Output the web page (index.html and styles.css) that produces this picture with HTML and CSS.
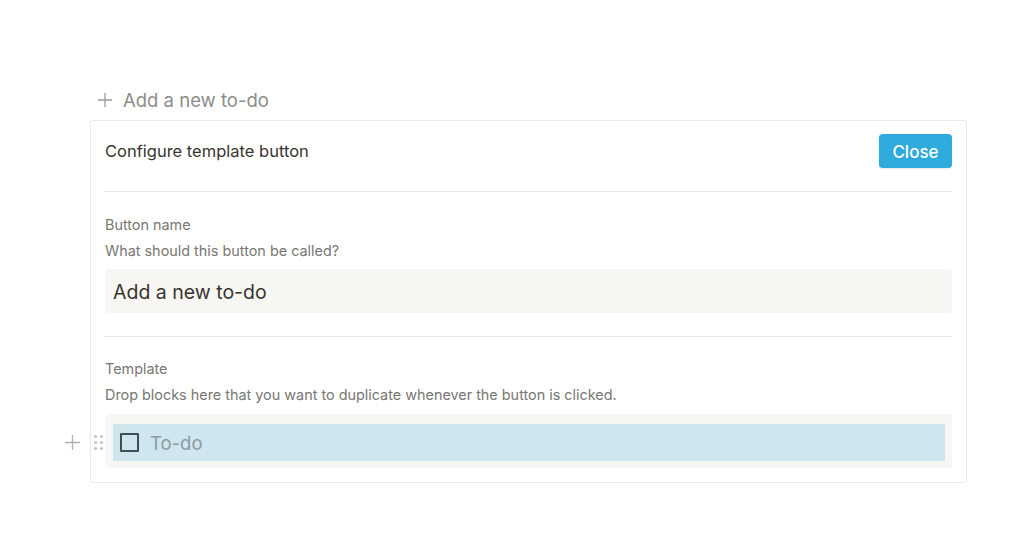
FILE: index.html
```html
<!DOCTYPE html>
<html>
<head>
<meta charset="utf-8">
<link rel="stylesheet" href="styles.css">
</head>
<body>
<div class="page">
  <div class="trigger">
    <svg class="plus" width="16" height="16" viewBox="0 0 16 16"><path d="M8 1v14M1 8h14" stroke="#9b9a97" stroke-width="1.3" fill="none"/></svg>
    <span>Add a new to-do</span>
  </div>
  <div class="card">
    <div class="header">
      <div class="title">Configure template button</div>
      <button class="close">Close</button>
    </div>
    <div class="section">
      <div class="label">Button name</div>
      <div class="hint">What should this button be called?</div>
      <div class="input">Add a new to-do</div>
    </div>
    <div class="section last">
      <div class="label">Template</div>
      <div class="hint">Drop blocks here that you want to duplicate whenever the button is clicked.</div>
      <div class="template">
        <div class="row">
          <div class="handles">
            <svg width="17" height="17" viewBox="0 0 17 17"><path d="M8.5 1v15M1 8.5h15" stroke="#b4b3b0" stroke-width="1.3" fill="none"/></svg>
            <svg width="11" height="17" viewBox="0 0 11 17"><g fill="#c6c5c2"><circle cx="2.5" cy="2.5" r="1.6"/><circle cx="8.5" cy="2.5" r="1.6"/><circle cx="2.5" cy="8.5" r="1.6"/><circle cx="8.5" cy="8.5" r="1.6"/><circle cx="2.5" cy="14.5" r="1.6"/><circle cx="8.5" cy="14.5" r="1.6"/></g></svg>
          </div>
          <span class="checkbox"></span>
          <span class="todo">To-do</span>
        </div>
      </div>
    </div>
  </div>
</div>
</body>
</html>
```
FILE: styles.css
```css
* { box-sizing: border-box; }
body {
  margin: 0;
  background: #fff;
  font-family: Inter, "Liberation Sans", Arial, sans-serif;
  color: #37352f;
}
.page {
  padding: 89px 0 0 90px;
}
.trigger {
  display: flex;
  align-items: center;
  gap: 10px;
  padding-left: 7px;
  height: 22px;
  font-size: 18.5px;
  color: #8d8c89;
  margin-bottom: 9px;
}
.card {
  width: 877px;
  border: 1px solid #e9e9e7;
  border-radius: 3px;
  padding: 0 14px 14px;
  box-shadow: 0 0 1px rgba(0,0,0,0.03);
}
.header {
  display: flex;
  align-items: center;
  justify-content: space-between;
  padding: 13px 0 23px;
  border-bottom: 1px solid #e6e6e4;
}
.title {
  font-size: 16.5px;
  line-height: 20px;
  color: #37352f;
}
.close {
  width: 73px;
  height: 34px;
  border: none;
  border-radius: 4px;
  background: #2eaadc;
  color: #fff;
  font-family: inherit;
  font-size: 17px;
  font-weight: 500;
  box-shadow: 0 1px 2px rgba(15,15,15,0.1);
  padding: 2px 0 0;
}
.section {
  padding: 23px 0 23px;
  border-bottom: 1px solid #e6e6e4;
}
.section.last {
  border-bottom: none;
  padding: 22px 0 0;
}
.label, .hint {
  font-size: 14.4px;
  line-height: 20px;
  color: #787774;
}
.hint {
  margin-top: 6px;
}
.input {
  margin-top: 8px;
  height: 44px;
  background: #f7f6f3;
  border-radius: 4px;
  padding: 2px 8px 0;
  display: flex;
  align-items: center;
  font-size: 19.5px;
  color: #37352f;
}
.template {
  margin-top: 9px;
  background: #f7f6f3;
  border-radius: 4px;
  padding: 10px 7px 7px 8px;
}
.row {
  position: relative;
  height: 37px;
  background: #cfe6ee;
  display: flex;
  align-items: center;
  padding-left: 7px;
  gap: 11px;
}
.handles {
  position: absolute;
  left: -49px;
  top: 10px;
  display: flex;
  align-items: center;
  gap: 12px;
}
.checkbox {
  width: 19px;
  height: 19px;
  border: 2px solid #3f4f55;
  border-radius: 1px;
}
.todo {
  font-size: 18.5px;
  color: #899ba1;
}
```
